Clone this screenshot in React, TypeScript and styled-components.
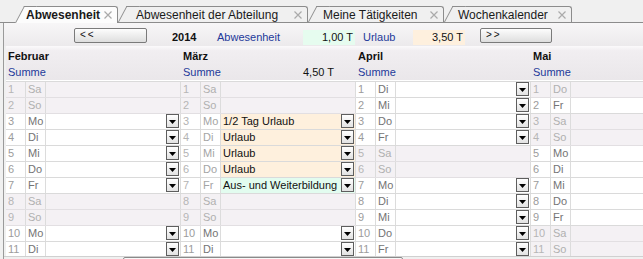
import React from 'react';
import styled, { createGlobalStyle } from 'styled-components';

const Global = createGlobalStyle`
  html, body { margin: 0; padding: 0; background: #f0f0f0; }
  body { font-family: "Liberation Sans", Arial, sans-serif; }
`;

const Frame = styled.div`
  width: 643px;
  height: 259px;
  overflow: hidden;
  background: #f0f0f0;
  display: flex;
  flex-direction: column;
  font-family: "Liberation Sans", Arial, sans-serif;
`;

const TabStrip = styled.div`
  height: 23px;
  flex-shrink: 0;
  box-sizing: border-box;
  display: flex;
  align-items: flex-end;
  padding-left: 15px;
  border-bottom: 1px solid #8c8c8c;
`;

const Tab = styled.div<{ $active?: boolean; $w: number }>`
  position: relative;
  z-index: 0;
  box-sizing: border-box;
  width: ${p => p.$w}px;
  height: ${p => (p.$active ? 17 : 16)}px;
  margin-left: 9px;
  margin-bottom: ${p => (p.$active ? -1 : 0)}px;
  padding: 0 5px 0 0;
  display: flex;
  align-items: center;
  background: ${p => (p.$active ? '#fcfcfc' : '#f0f0f0')};
  border-top: 1px solid #8c8c8c;
  border-right: 1px solid #8c8c8c;
  border-top-right-radius: 3px;
  font-size: 12px;
  font-weight: ${p => (p.$active ? 700 : 400)};
  color: #1a1a1a;
  white-space: nowrap;
  &:first-child {
    margin-left: 9px;
  }
  &::before {
    content: '';
    position: absolute;
    z-index: -1;
    top: -1px;
    bottom: 0;
    left: -9px;
    width: 12px;
    border-top: 1px solid #8c8c8c;
    border-left: 1px solid #8c8c8c;
    background: inherit;
    transform-origin: bottom left;
    transform: skewX(-28deg);
  }
`;

const TabLabel = styled.span<{ $pad: number }>`
  padding-left: ${p => p.$pad}px;
`;

const CloseIcon = styled.svg`
  margin-left: auto;
  width: 8px;
  height: 8px;
  flex-shrink: 0;
`;

const Panel = styled.div`
  flex: 1;
  min-height: 0;
  display: flex;
  flex-direction: column;
  margin-left: 3px;
  border-left: 1px solid #9a9a9a;
`;

const Toolbar = styled.div`
  height: 23px;
  flex-shrink: 0;
  box-sizing: border-box;
  display: flex;
  align-items: flex-start;
  padding: 5px 0 0 70px;
  background: linear-gradient(#f7f6f7, #eceaec);
  font-size: 11px;
`;

const NavButton = styled.div<{ $w: number; $ml?: number }>`
  box-sizing: border-box;
  width: ${p => p.$w}px;
  height: 15px;
  margin-left: ${p => p.$ml ?? 0}px;
  border: 1px solid #7a7a7a;
  border-radius: 2px;
  background: linear-gradient(#fdfdfd, #dedede);
  font-size: 10px;
  line-height: 12px;
  letter-spacing: 2px;
  padding-left: 5px;
  color: #111;
`;

const Label = styled.span<{ $w: number; $ml?: number; $bold?: boolean; $blue?: boolean }>`
  width: ${p => p.$w}px;
  margin-left: ${p => p.$ml ?? 0}px;
  margin-top: 2px;
  line-height: 15px;
  font-weight: ${p => (p.$bold ? 700 : 400)};
  color: ${p => (p.$blue ? '#23399a' : '#111')};
`;

const ValueBox = styled.span<{ $bg: string }>`
  box-sizing: border-box;
  width: 52px;
  height: 15px;
  margin-top: 2px;
  line-height: 15px;
  text-align: right;
  padding-right: 2px;
  background: ${p => p.$bg};
  color: #111;
`;

const Viewport = styled.div`
  height: 210px;
  flex-shrink: 0;
  overflow: hidden;
  display: flex;
  padding-left: 2px;
`;

const Month = styled.div`
  width: 175px;
  flex-shrink: 0;
  display: flex;
  flex-direction: column;
  font-size: 11px;
`;

const MonthHeader = styled.div`
  height: 35px;
  box-sizing: border-box;
  border-bottom: 1px solid #ffffff;
  background: linear-gradient(#fbfafb 0%, #f1eef1 14%, #eae7ea 100%);
  display: flex;
  flex-direction: column;
  padding-top: 2px;
`;

const MonthTitle = styled.div`
  height: 16px;
  line-height: 16px;
  padding-left: 2px;
  font-weight: 700;
  color: #111;
`;

const SumRow = styled.div`
  height: 16px;
  line-height: 15px;
  box-sizing: border-box;
  display: flex;
  padding: 1px 22px 0 2px;
  color: #23399a;
`;

const SumValue = styled.span`
  margin-left: auto;
  color: #111;
`;

const Rows = styled.div`
  border-top: 1px solid #dadada;
  background: #fff;
`;

const Row = styled.div<{ $off: boolean }>`
  height: 16px;
  box-sizing: border-box;
  display: flex;
  border-bottom: 1px solid ${p => (p.$off ? '#e2dfe2' : '#dadada')};
  background: ${p => (p.$off ? '#f4f1f4' : '#ffffff')};
  line-height: 15px;
`;

const NumCell = styled.span<{ $tone: string }>`
  width: 20px;
  box-sizing: border-box;
  padding-left: 2px;
  border-right: 1px solid #dcdcdc;
  color: ${p => p.$tone};
`;

const DayCell = styled.span<{ $tone: string }>`
  width: 20px;
  box-sizing: border-box;
  padding-left: 2px;
  border-right: 1px solid #dcdcdc;
  color: ${p => p.$tone};
`;

const ContentCell = styled.span<{ $bg: string }>`
  flex: 1;
  display: flex;
  box-sizing: border-box;
  padding-left: 2px;
  border-right: 1px solid #dcdcdc;
  background: ${p => p.$bg};
  color: #111;
  white-space: nowrap;
`;

const DropButton = styled.span`
  margin-left: auto;
  margin-right: 1px;
  width: 13px;
  height: 14px;
  box-sizing: border-box;
  border: 1px solid #5e5e5e;
  background: linear-gradient(#ffffff, #e2e2e2);
  display: flex;
  align-items: flex-end;
  justify-content: center;
  padding-bottom: 3px;
  flex-shrink: 0;
`;

const HScroll = styled.div`
  height: 17px;
  flex-shrink: 0;
  box-sizing: border-box;
  border-top: 1px solid #d0d0d0;
  background: #f0f0f0;
  padding-left: 119px;
`;

const HThumb = styled.div`
  width: 280px;
  height: 14px;
  box-sizing: border-box;
  border: 1px solid #8a8a8a;
  border-radius: 2px;
  background: linear-gradient(#fafafa, #e2e2e2);
`;

const WD = ['Mo', 'Di', 'Mi', 'Do', 'Fr', 'Sa', 'So'];

type Entry = { text: string; bg: string };

type MonthDef = {
  name: string;
  start: number;
  editable: boolean;
  sum?: string;
  holidays?: number[];
  entries?: Record<number, Entry>;
};

const URLAUB = '#fef0dd';
const BILDUNG = '#e2fcef';

const months: MonthDef[] = [
  { name: 'Februar', start: 5, editable: true },
  {
    name: 'März',
    start: 5,
    editable: true,
    sum: '4,50 T',
    entries: {
      3: { text: '1/2 Tag Urlaub', bg: URLAUB },
      4: { text: 'Urlaub', bg: URLAUB },
      5: { text: 'Urlaub', bg: URLAUB },
      6: { text: 'Urlaub', bg: URLAUB },
      7: { text: 'Aus- und Weiterbildung', bg: BILDUNG },
    },
  },
  { name: 'April', start: 1, editable: true },
  { name: 'Mai', start: 3, editable: false, holidays: [1] },
];

const tabs = [
  { label: 'Abwesenheit', w: 94, pad: 2, active: true },
  { label: 'Abwesenheit der Abteilung', w: 181, pad: 9 },
  { label: 'Meine Tätigkeiten', w: 127, pad: 6 },
  { label: 'Wochenkalender', w: 119, pad: 5 },
];

const Close = () => (
  <CloseIcon viewBox="0 0 8 8">
    <path d="M0.5 0.5 L7.5 7.5 M7.5 0.5 L0.5 7.5" stroke="#aaaaaa" strokeWidth="1.2" fill="none" />
  </CloseIcon>
);

const Arrow = () => (
  <svg width="7" height="4" viewBox="0 0 7 4">
    <polygon points="0,0 7,0 3.5,4" fill="#000" />
  </svg>
);

const MonthColumn = ({ m }: { m: MonthDef }) => {
  const days = Array.from({ length: 11 }, (_, i) => i + 1);
  return (
    <Month>
      <MonthHeader>
        <MonthTitle>{m.name}</MonthTitle>
        <SumRow>
          Summe
          {m.sum && <SumValue>{m.sum}</SumValue>}
        </SumRow>
      </MonthHeader>
      <Rows>
        {days.map(d => {
          const wd = (m.start + d - 1) % 7;
          const off = wd >= 5 || (m.holidays ?? []).includes(d);
          const entry = m.entries?.[d];
          const numTone = off ? '#b6b6b6' : entry ? '#b4b4b4' : '#9c9c9c';
          const dayTone = off ? '#b0b0b0' : entry ? '#a4a4a4' : '#747474';
          return (
            <Row key={d} $off={off}>
              <NumCell $tone={numTone}>{d}</NumCell>
              <DayCell $tone={dayTone}>{WD[wd]}</DayCell>
              <ContentCell $bg={entry ? entry.bg : 'transparent'}>
                {entry?.text}
                {m.editable && !off && (
                  <DropButton>
                    <Arrow />
                  </DropButton>
                )}
              </ContentCell>
            </Row>
          );
        })}
      </Rows>
    </Month>
  );
};

export default function App() {
  return (
    <Frame>
      <Global />
      <TabStrip>
        {tabs.map(t => (
          <Tab key={t.label} $active={t.active} $w={t.w}>
            <TabLabel $pad={t.pad}>{t.label}</TabLabel>
            <Close />
          </Tab>
        ))}
      </TabStrip>
      <Panel>
        <Toolbar>
          <NavButton $w={73}>&lt;&lt;</NavButton>
          <Label $w={45} $ml={25} $bold>2014</Label>
          <Label $w={86} $blue>Abwesenheit</Label>
          <ValueBox $bg="#e6fcef">1,00 T</ValueBox>
          <Label $w={50} $ml={8} $blue>Urlaub</Label>
          <ValueBox $bg="#fef0de">3,50 T</ValueBox>
          <NavButton $w={72} $ml={15}>&gt;&gt;</NavButton>
        </Toolbar>
        <Viewport>
          {months.map(m => (
            <MonthColumn key={m.name} m={m} />
          ))}
        </Viewport>
        <HScroll>
          <HThumb />
        </HScroll>
      </Panel>
    </Frame>
  );
}
